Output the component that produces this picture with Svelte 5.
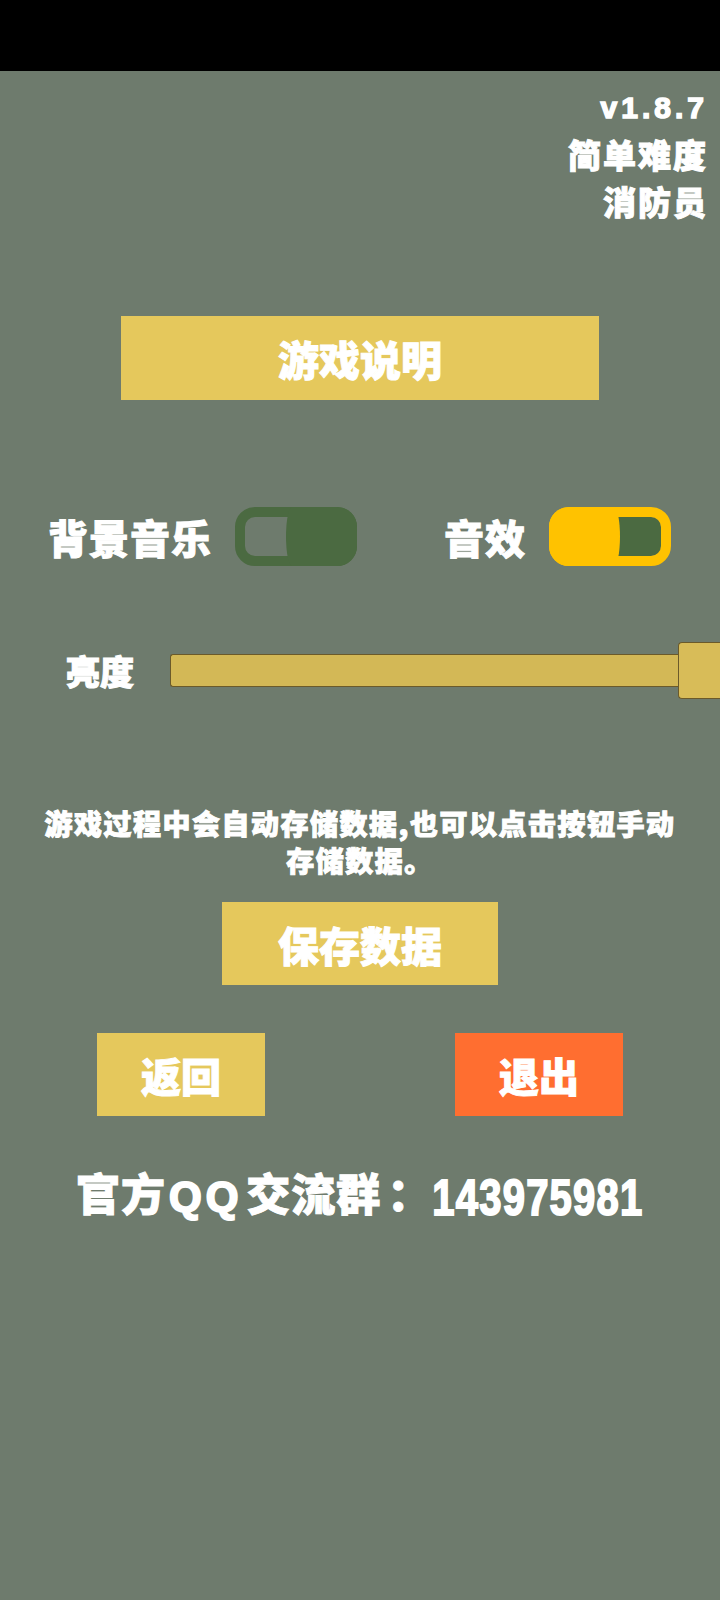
<script>
  let music = $state(true);
  let sound = $state(true);
  let brightness = $state(100);
</script>

<div class="screen">
  <div class="statusbar"></div>

  <div class="info">
    <div class="version">v1.8.7</div>
    <div>简单难度</div>
    <div>消防员</div>
  </div>

  <button class="btn help">游戏说明</button>

  <div class="toggles">
    <span class="toggle-label">背景音乐</span>
    <button class="switch off" aria-label="背景音乐" onclick={() => (music = !music)}>
      <span class="knob"></span>
    </button>
    <span class="toggle-label second">音效</span>
    <button class="switch on" aria-label="音效" onclick={() => (sound = !sound)}>
      <span class="knob"></span>
    </button>
  </div>

  <div class="brightness">
    <span class="brightness-label">亮度</span>
    <div class="track" style="--value: {brightness}">
      <div class="handle"></div>
    </div>
  </div>

  <p class="note">游戏过程中会自动存储数据,也可以点击按钮手动存储数据。</p>

  <button class="btn save">保存数据</button>

  <div class="actions">
    <button class="btn small">返回</button>
    <button class="btn small exit">退出</button>
  </div>

  <div class="group">官方<span class="latin">QQ</span>交流群<span class="colon">：</span><span class="number">143975981</span></div>
</div>

<style>
  :global(body) {
    margin: 0;
    background: #6e7b6d;
  }

  .screen {
    height: 1600px;
    overflow: hidden;
    background: #6e7b6d;
    color: #fff;
    font-family: "Noto Sans CJK SC", "Liberation Sans", sans-serif;
    font-weight: 900;
    -webkit-text-stroke: 1px #fff;
  }

  .statusbar {
    height: 71px;
    background: #000;
  }

  .info {
    padding: 13px 12px 0 0;
    height: 149px;
    text-align: right;
    font-size: 33px;
    line-height: 47px;
    letter-spacing: 2px;
  }

  .version {
    letter-spacing: 4px;
    font-family: "Liberation Sans", sans-serif;
    font-weight: 700;
    font-size: 30px;
    -webkit-text-stroke: 1.5px #fff;
  }

  button {
    display: block;
    border: none;
    padding: 0;
    color: inherit;
    font: inherit;
    -webkit-text-stroke: inherit;
  }

  .btn {
    background: #e5c85c;
    display: flex;
    align-items: center;
    justify-content: center;
  }

  .help {
    width: 478px;
    height: 84px;
    margin: 83px 0 0 121px;
    font-size: 41px;
  }

  .toggles {
    display: flex;
    align-items: center;
    margin-top: 107px;
    height: 59px;
    padding-left: 48px;
  }

  .toggle-label {
    font-size: 40px;
    letter-spacing: 1px;
    width: 187px;
  }

  .toggle-label.second {
    width: 105px;
    margin-left: 87px;
  }

  .switch {
    position: relative;
    width: 122px;
    height: 59px;
    box-sizing: border-box;
    border: 10px solid #4b6a41;
    border-radius: 20px;
    background: transparent;
    background-clip: padding-box;
  }

  .switch .knob {
    position: absolute;
    top: -10px;
    bottom: -10px;
    right: -10px;
    width: 71px;
    background: #4b6a41;
    border-radius: 6px 20px 20px 6px / 50% 20px 20px 50%;
  }

  .switch.on {
    border-color: #ffc200;
    background: #4b6a41;
    background-clip: padding-box;
  }

  .switch.on .knob {
    left: -10px;
    right: auto;
    background: #ffc200;
    border-radius: 20px 6px 6px 20px / 20px 50% 50% 20px;
  }

  .brightness {
    display: flex;
    align-items: center;
    margin-top: 75px;
    height: 59px;
    padding-left: 66px;
  }

  .brightness-label {
    font-size: 34px;
    width: 104px;
  }

  .track {
    position: relative;
    flex: 1;
    height: 33px;
    box-sizing: border-box;
    border: 1px solid #6b5a2a;
    border-right: none;
    border-radius: 3px 0 0 3px;
    background: #d3b856;
  }

  .handle {
    position: absolute;
    top: -13px;
    right: 0;
    width: 42px;
    height: 57px;
    box-sizing: border-box;
    border: 1px solid #6b5a2a;
    border-right: none;
    border-radius: 4px 0 0 4px;
    background: #d8bc58;
  }

  .note {
    margin: 105px 44px 0;
    font-size: 28px;
    line-height: 37px;
    letter-spacing: 1.5px;
    text-align: center;
  }

  .save {
    width: 276px;
    height: 83px;
    margin: 23px 0 0 222px;
    font-size: 41px;
  }

  .actions {
    display: flex;
    gap: 190px;
    margin: 48px 0 0 97px;
  }

  .small {
    width: 168px;
    height: 83px;
    font-size: 40px;
  }

  .exit {
    background: #ff6e30;
  }

  .group {
    margin-top: 46px;
    padding-left: 76px;
    font-size: 44px;
    line-height: 60px;
    letter-spacing: 1px;
    white-space: nowrap;
  }

  .latin {
    font-family: "Liberation Sans", sans-serif;
    font-size: 42px;
    font-weight: 700;
    letter-spacing: 4px;
    margin: 0 4px 0 3px;
    -webkit-text-stroke: 2px #fff;
  }

  .colon {
    margin-left: 6px;
  }

  .number {
    display: inline-block;
    font-family: "Liberation Sans", sans-serif;
    font-size: 40px;
    font-weight: 700;
    letter-spacing: 1.2px;
    transform: scaleY(1.25);
    -webkit-text-stroke: 1.5px #fff;
  }
</style>
